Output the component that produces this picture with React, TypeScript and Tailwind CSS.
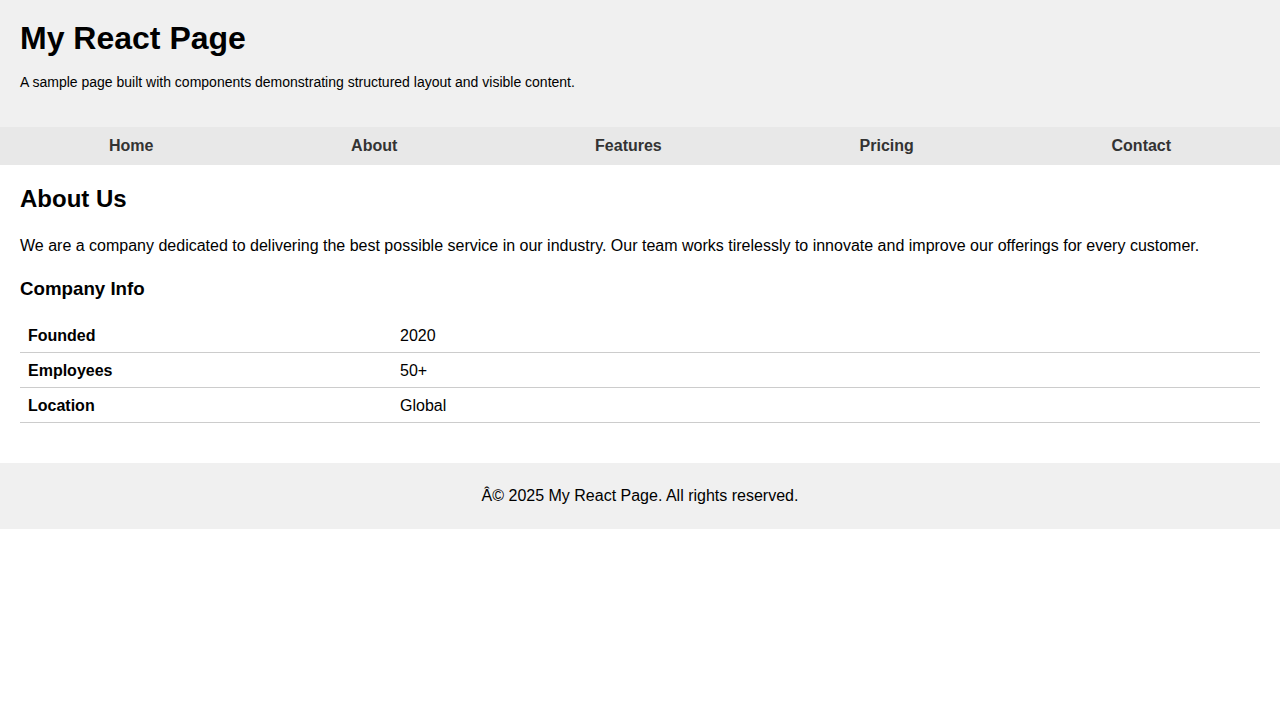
import React from "react";

export default function App() {
  const links = ["Home", "About", "Features", "Pricing", "Contact"];
  const rows: [string, string][] = [
    ["Founded", "2020"],
    ["Employees", "50+"],
    ["Location", "Global"],
  ];
  return (
    <div className="bg-white text-black" style={{ fontFamily: '"Liberation Sans", Arial, sans-serif' }}>
      <header className="bg-[#f0f0f0] p-[20px]">
        <h1 className="text-[32px] font-bold leading-[37px] m-0">My React Page</h1>
        <p className="text-[14px] leading-[16px] mt-[17px] mb-[17px]">
          A sample page built with components demonstrating structured layout and visible content.
        </p>
      </header>
      <nav className="bg-[#e8e8e8] p-[10px] flex justify-around">
        {links.map((l) => (
          <a key={l} className="text-[16px] leading-[18px] font-bold text-[#333]">
            {l}
          </a>
        ))}
      </nav>
      <main className="p-[20px]">
        <h2 className="text-[24px] font-bold leading-[28px]">About Us</h2>
        <p className="text-[16px] leading-[18px] mt-[24px]">
          We are a company dedicated to delivering the best possible service in our industry. Our team works tirelessly to innovate and improve our offerings for every customer.
        </p>
        <h3 className="text-[18.72px] font-bold leading-[22px] mt-[23px]">Company Info</h3>
        <table className="w-full border-collapse mt-[18px]">
          <tbody>
            {rows.map(([k, v]) => (
              <tr key={k} className="border-b border-[#ccc]">
                <td className="w-[30%] pt-[9px] pb-[7px] px-[8px] font-bold text-[16px] leading-[18px]">{k}</td>
                <td className="pt-[9px] pb-[7px] px-[8px] text-[16px] leading-[18px]">{v}</td>
              </tr>
            ))}
          </tbody>
        </table>
      </main>
      <footer className="bg-[#f0f0f0] mt-[20px] h-[66px] flex items-center justify-center text-[16px]">
        Â© 2025 My React Page. All rights reserved.
      </footer>
    </div>
  );
}
